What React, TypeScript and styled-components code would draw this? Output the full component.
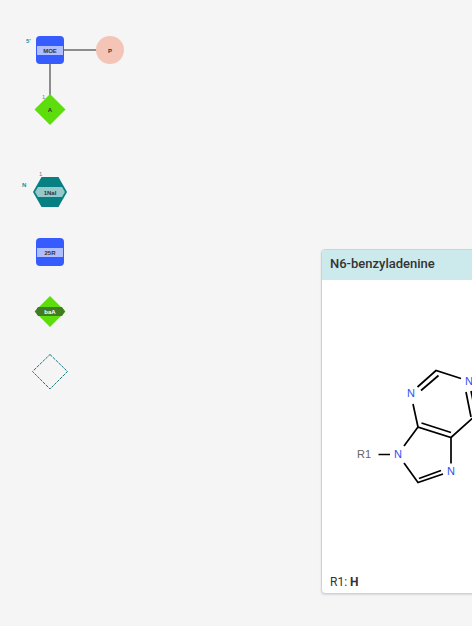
import React from "react";
import styled, { createGlobalStyle } from "styled-components";

const GlobalStyle = createGlobalStyle`
  *, *::before, *::after { box-sizing: border-box; }
  body {
    margin: 0;
    background: #f5f5f5;
    font-family: Roboto, sans-serif;
    color: #333333;
  }
`;

const Workspace = styled.main`
  position: relative;
  width: 100%;
  height: 100vh;
  overflow: hidden;
  background: #f5f5f5;
`;

const Canvas = styled.svg`
  display: block;
  width: 100%;
  height: 100%;
  font-family: "Liberation Sans", sans-serif;
`;

const Label = styled.text<{ $light?: boolean }>`
  font-size: 6px;
  font-weight: 700;
  text-anchor: middle;
  fill: ${(p) => (p.$light ? "#ffffff" : "#333333")};
`;

const Terminal = styled.text`
  font-size: 6px;
  font-weight: 700;
  fill: #0097a8;
`;

const Position = styled.text`
  font-size: 6px;
  fill: #7c7c7f;
`;

const Bond = styled.path`
  fill: none;
  stroke: #8d8d8d;
  stroke-width: 2;
`;

const PreviewCard = styled.aside`
  position: absolute;
  left: 321px;
  top: 249px;
  width: 345px;
  display: flex;
  flex-direction: column;
  overflow: hidden;
  background: #ffffff;
  border: 1px solid #cad3dd;
  border-radius: 4px;
  box-shadow: 0 1px 2px rgba(103, 104, 132, 0.2);
`;

const PreviewTitle = styled.h2`
  margin: 0;
  padding: 5px 8px 8px;
  background: #cce9ec;
  font-size: 13px;
  line-height: 17px;
  font-weight: 500;
`;

const Structure = styled.svg`
  display: block;
  width: 100%;
  height: 290px;
  font-family: "Liberation Sans", sans-serif;
  font-size: 11px;
  text-anchor: middle;
`;

const Attachments = styled.p`
  margin: 0;
  padding: 4px 8px 3px;
  font-size: 12px;
  line-height: 16px;
`;

function Sugar({ y, name }: { y: number; name: string }) {
  return (
    <g transform={`translate(50 ${y})`}>
      <rect x="-14" y="-14" width="28" height="28" rx="4" fill="#365cff" />
      <rect x="-13" y="-4" width="26" height="9" fill="#afbeff" />
      <Label y="3">{name}</Label>
    </g>
  );
}

const atoms = [
  [411, 393],
  [469, 381],
  [398, 454],
  [451, 471],
];

export default function App() {
  return (
    <>
      <GlobalStyle />
      <Workspace>
        <Canvas role="img" aria-label="Monomer sequence">
          <Bond d="M50 50H110M50 50V109" />
          <Terminal x="26" y="43">5’</Terminal>
          <Sugar y={50} name="MOE" />
          <circle cx="110" cy="50" r="14" fill="#f4c5b7" />
          <Label x="110" y="53">P</Label>
          <Position x="42" y="99">1</Position>
          <path d="M50 94L65.500 109.500L50 125L34.500 109.500Z" fill="#5ddd0c" />
          <Label x="50" y="112">A</Label>
          <Position x="39" y="176">1</Position>
          <Terminal x="22" y="187">N</Terminal>
          <path d="M41.500 177H58.500L67 192L58.500 207H41.500L33 192Z" fill="#078083" />
          <path d="M38 187H62L65 192L62 197H38L35 192Z" fill="#96c9ca" />
          <Label x="50" y="195">1Nal</Label>
          <Sugar y={252} name="25R" />
          <path d="M50 296L65.500 311.500L50 327L34.500 311.500Z" fill="#5ddd0c" />
          <path d="M38 307H62L65 311.500L62 316H38L35 311.500Z" fill="#417b22" />
          <Label $light x="50" y="314">baA</Label>
          <path
            d="M50 354.500L67.500 371.500L50 389L32.500 371.500Z"
            fill="none"
            stroke="#167782"
            strokeWidth="1"
            strokeDasharray="3 1"
          />
        </Canvas>
        <PreviewCard>
          <PreviewTitle>N6-benzyladenine</PreviewTitle>
          <Structure role="img" aria-label="Structure of N6-benzyladenine">
            <g transform="translate(-322 -280)">
              <path
                d="M417.500 387L436 370.500L461 378.500M421 390.500L438.500 375.500M471 391L476 415L451 437.500L418 427L413 404M466 392L471 417M421.500 423L451 432.500M418 427L404 446M404 463L418 482.500L443 474M419 478.500L441 470.500M451 437.500V463.500M378.500 454.500H390"
                fill="none"
                stroke="#000000"
                strokeWidth="1.700"
              />
              {atoms.map(([x, y]) => (
                <text key={`${x}-${y}`} x={x} y={y + 4} fill="#304ff7">
                  N
                </text>
              ))}
              <text x="364" y="458" fill="#666666">R1</text>
            </g>
          </Structure>
          <Attachments>
            R1: <strong>H</strong>
          </Attachments>
        </PreviewCard>
      </Workspace>
    </>
  );
}
